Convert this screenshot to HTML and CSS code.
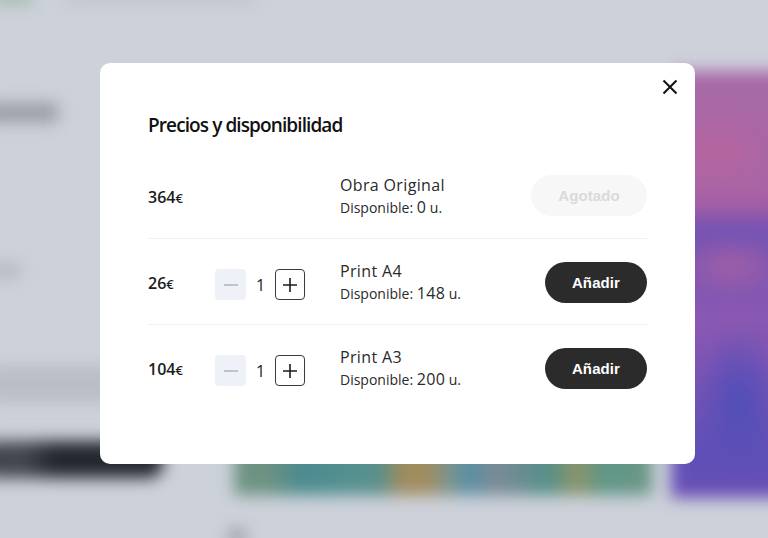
FILE: index.html
```html
<!DOCTYPE html>
<html lang="en">
<head>
    <meta charset="UTF-8">
    <meta name="viewport" content="width=device-width, initial-scale=1.0">
    <title>Precios y disponibilidad</title>
    <link rel="stylesheet" href="styles.css">
</head>
<body>
    <div class="backdrop">
        <div class="blob logo"></div>
        <div class="blob topline"></div>
        <div class="blob heading"></div>
        <div class="blob label"></div>
        <div class="blob para"></div>
        <div class="blob dark-button"></div>
        <div class="blob thumb-wide"></div>
        <div class="blob thumb-side"></div>
        <div class="blob foot"></div>
    </div>

    <div class="overlay">
        <div class="modal">
            <button class="close" aria-label="Cerrar">
                <svg width="16" height="16" viewBox="0 0 16 16"><path d="M1.5 1.5l13 13M14.5 1.5l-13 13" stroke="#111" stroke-width="2" fill="none"/></svg>
            </button>
            <h2 class="title">Precios y disponibilidad</h2>

            <div class="row">
                <div class="price">364<span class="euro">€</span></div>
                <div class="stepper"></div>
                <div class="info">
                    <div class="name">Obra Original</div>
                    <div class="stock">Disponible: <span class="count">0</span> u.</div>
                </div>
                <button class="buy off">Agotado</button>
            </div>

            <div class="row">
                <div class="price">26<span class="euro">€</span></div>
                <div class="stepper">
                    <button class="step minus" aria-label="Menos"><svg width="14" height="14" viewBox="0 0 14 14"><path d="M0 7h14" stroke="#b4b8c2" stroke-width="1.6"/></svg></button>
                    <span class="qty">1</span>
                    <button class="step plus" aria-label="Más"><svg width="14" height="14" viewBox="0 0 14 14"><path d="M0 7h14M7 0v14" stroke="#1c1c1c" stroke-width="1.6"/></svg></button>
                </div>
                <div class="info">
                    <div class="name">Print A4</div>
                    <div class="stock">Disponible: <span class="count">148</span> u.</div>
                </div>
                <button class="buy">Añadir</button>
            </div>

            <div class="row">
                <div class="price">104<span class="euro">€</span></div>
                <div class="stepper">
                    <button class="step minus" aria-label="Menos"><svg width="14" height="14" viewBox="0 0 14 14"><path d="M0 7h14" stroke="#b4b8c2" stroke-width="1.6"/></svg></button>
                    <span class="qty">1</span>
                    <button class="step plus" aria-label="Más"><svg width="14" height="14" viewBox="0 0 14 14"><path d="M0 7h14M7 0v14" stroke="#1c1c1c" stroke-width="1.6"/></svg></button>
                </div>
                <div class="info">
                    <div class="name">Print A3</div>
                    <div class="stock">Disponible: <span class="count">200</span> u.</div>
                </div>
                <button class="buy">Añadir</button>
            </div>
        </div>
    </div>
</body>
</html>
```

FILE: styles.css
```css
* {
    box-sizing: border-box;
}

html, body {
    margin: 0;
    height: 100%;
    overflow: hidden;
}

body {
    font-family: "Open Sans", sans-serif;
    background-color: #cdd1da;
    color: #1c1c1c;
}

/* blurred page behind the dialog */
.backdrop {
    position: fixed;
    inset: 0;
    overflow: hidden;
}

.blob {
    position: absolute;
    filter: blur(8px);
}

.logo {
    left: -6px;
    top: -10px;
    width: 38px;
    height: 13px;
    background: #9db8a4;
}

.topline {
    left: 65px;
    top: -8px;
    width: 190px;
    height: 10px;
    background: #bcc0c9;
}

.heading {
    left: -14px;
    top: 103px;
    width: 72px;
    height: 19px;
    background: #989ca5;
}

.label {
    left: -10px;
    top: 263px;
    width: 30px;
    height: 15px;
    background: #b4b8c0;
}

.para {
    left: -14px;
    top: 366px;
    width: 135px;
    height: 36px;
    background: #b9bdc5;
}

.dark-button {
    left: -20px;
    top: 441px;
    width: 183px;
    height: 37px;
    border-radius: 14px;
    background: linear-gradient(90deg, #42464f 0, #42464f 45px, #22262e 75px);
}

.thumb-wide {
    left: 234px;
    top: 300px;
    width: 418px;
    height: 195px;
    background: linear-gradient(90deg, #6d9282 0%, #6d9282 8%, #4b8a90 16%, #55908e 28%, #5a8f8c 35%, #a08c5e 40%, #a08c5e 46%, #82938a 51%, #5590a6 56%, #7c8a96 62%, #6c8c90 68%, #52908a 75%, #8f9467 82%, #5f9688 88%, #6b9684 100%);
}

.thumb-side {
    left: 671px;
    top: 71px;
    width: 130px;
    height: 427px;
    background:
        radial-gradient(ellipse 60px 32px at 60px 195px, rgba(164, 96, 166, 0.95), transparent),
        radial-gradient(ellipse 42px 75px at 68px 330px, rgba(78, 78, 184, 1), transparent),
        radial-gradient(ellipse 60px 45px at 45px 80px, rgba(184, 100, 156, 0.9), transparent),
        linear-gradient(180deg, #a768a6 0%, #a866a6 26%, #a85fa4 31%, #7252b4 37%, #7f55b2 50%, #8a58b2 58%, #7a53b4 72%, #5e4fb6 90%, #6a4fb6 100%);
}

.foot {
    left: 228px;
    top: 529px;
    width: 18px;
    height: 14px;
    background: #989ca6;
}

/* dialog */
.overlay {
    position: fixed;
    inset: 0;
    display: flex;
    align-items: flex-start;
    justify-content: flex-start;
    padding: 63px 0 0 100px;
}

.modal {
    position: relative;
    width: 595px;
    height: 401px;
    padding: 49px 48px 0;
    background: #fff;
    border-radius: 10px;
}

.close {
    position: absolute;
    top: 16px;
    right: 17px;
    width: 16px;
    height: 16px;
    padding: 0;
    border: none;
    background: none;
    display: flex;
}

.title {
    margin: 0 0 15.5px;
    font-size: 19px;
    line-height: 26px;
    font-weight: 600;
    letter-spacing: -0.9px;
    color: #111;
}

.row {
    display: flex;
    align-items: center;
    height: 85.5px;
    border-bottom: 1px solid #eff0f2;
}

.row:last-child {
    border-bottom: none;
}

.price {
    width: 67px;
    padding-top: 3px;
    font-size: 16px;
    font-weight: 600;
    color: #1c1c1c;
}

.euro {
    font-size: 13px;
}

.stepper {
    width: 125px;
    padding-top: 7px;
    display: flex;
    align-items: center;
}

.step {
    height: 31px;
    padding: 0;
    border-radius: 4px;
    display: flex;
    align-items: center;
    justify-content: center;
}

.minus {
    width: 31px;
    border: none;
    background: #eff1f8;
}

.plus {
    width: 30px;
    border: 1px solid #3a3a3a;
    background: #fff;
}

.qty {
    width: 29px;
    text-align: center;
    font-size: 16px;
}

.info {
    flex: 1;
}

.name {
    font-size: 16px;
    line-height: 24px;
    letter-spacing: 0.35px;
    color: #2a2a2a;
}

.stock {
    font-size: 14px;
    line-height: 20px;
    color: #2a2a2a;
}

.count {
    font-size: 16px;
    letter-spacing: 0.3px;
}

.buy {
    width: 102px;
    height: 41px;
    margin-top: 2px;
    padding: 0;
    border: none;
    border-radius: 21px;
    background: #2b2b2b;
    color: #fff;
    font-family: "Liberation Sans", Arial, sans-serif;
    font-size: 15px;
    font-weight: 700;
    letter-spacing: 0.1px;
}

.buy.off {
    width: 116px;
    margin-top: 0;
    background: #f7f7f7;
    color: #dadada;
}
```
